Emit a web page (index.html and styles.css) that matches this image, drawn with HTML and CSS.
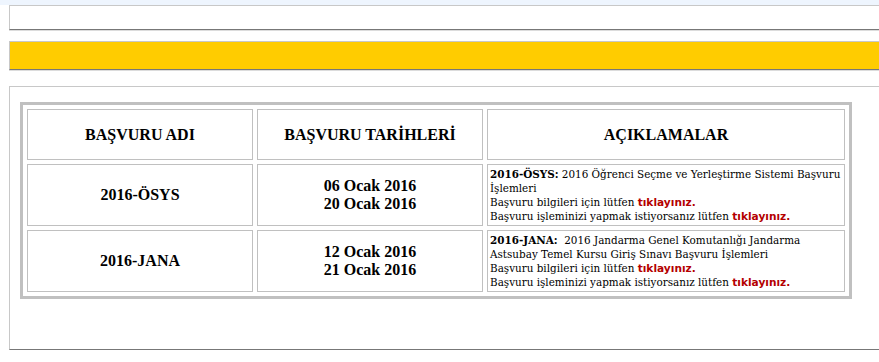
FILE: index.html
```html
<!DOCTYPE html>
<html lang="tr">
<head>
<meta charset="utf-8">
<title>Başvurular</title>
<link rel="stylesheet" href="styles.css">
</head>
<body>
<div class="topstrip"></div>
<div class="page">
  <div class="box box-top"></div>
  <div class="box box-yellow"></div>
  <div class="box box-main">
    <table class="apps">
      <tr class="head">
        <th class="c1">BAŞVURU ADI</th>
        <th class="c2">BAŞVURU TARİHLERİ</th>
        <th class="c3">AÇIKLAMALAR</th>
      </tr>
      <tr class="row">
        <td class="name">2016-ÖSYS</td>
        <td class="dates">06 Ocak 2016<br>20 Ocak 2016</td>
        <td class="desc"><b>2016-ÖSYS:</b> 2016 Öğrenci Seçme ve Yerleştirme Sistemi Başvuru İşlemleri<br>Başvuru bilgileri için lütfen <a href="#">tıklayınız.</a><br>Başvuru işleminizi yapmak istiyorsanız lütfen <a href="#">tıklayınız.</a></td>
      </tr>
      <tr class="row">
        <td class="name">2016-JANA</td>
        <td class="dates">12 Ocak 2016<br>21 Ocak 2016</td>
        <td class="desc"><b>2016-JANA:</b>&nbsp; 2016 Jandarma Genel Komutanlığı Jandarma Astsubay Temel Kursu Giriş Sınavı Başvuru İşlemleri<br>Başvuru bilgileri için lütfen <a href="#">tıklayınız.</a><br>Başvuru işleminizi yapmak istiyorsanız lütfen <a href="#">tıklayınız.</a></td>
      </tr>
    </table>
  </div>
</div>
</body>
</html>
```
FILE: styles.css
```css
html, body {
  margin: 0;
  padding: 0;
  background: #fff;
  overflow: hidden;
}
body {
  font-family: "Liberation Serif", "Times New Roman", serif;
  color: #000;
}
.topstrip {
  height: 5px;
  background: #eef5fe;
}
.page {
  padding-left: 9px;
}
.box {
  border: 1px solid #c8c8c8;
  border-right: none;
  border-bottom: 1px solid #777;
  box-shadow: 0 1px 0 #dcdcdc;
}
.box-top {
  height: 23px;
  background: #fff;
}
.box-yellow {
  margin-top: 11px;
  height: 27px;
  background: #ffcc00;
}
.box-main {
  margin-top: 16px;
  padding: 15px 0 0 10px;
  box-sizing: border-box;
  height: 264px;
}
.apps {
  width: 832px;
  border: 3px solid #c0c0c0;
  border-spacing: 4px;
  table-layout: fixed;
}
.apps th, .apps td {
  border: 1px solid #c0c0c0;
  padding: 0;
}
.c1, .c2 { width: 224px; }
.c3 { width: 356px; }
.head th {
  height: 49px;
  font-size: 16px;
  font-weight: bold;
  text-align: center;
  vertical-align: middle;
}
.row td {
  height: 58px;
}
.name, .dates {
  font-size: 16px;
  font-weight: bold;
  text-align: center;
  vertical-align: middle;
}
.dates {
  line-height: 18px;
}
.desc {
  font-family: "DejaVu Serif", Georgia, serif;
  font-size: 10.4px;
  line-height: 14px;
  vertical-align: top;
  text-align: left;
  padding: 2px 0 0 2px !important;
}
.desc b {
  font-weight: bold;
}
.desc a {
  font-family: "DejaVu Sans", Verdana, sans-serif;
  font-weight: bold;
  font-size: 10.6px;
  line-height: 14px;
  color: #b40000;
  text-decoration: none;
}
```
